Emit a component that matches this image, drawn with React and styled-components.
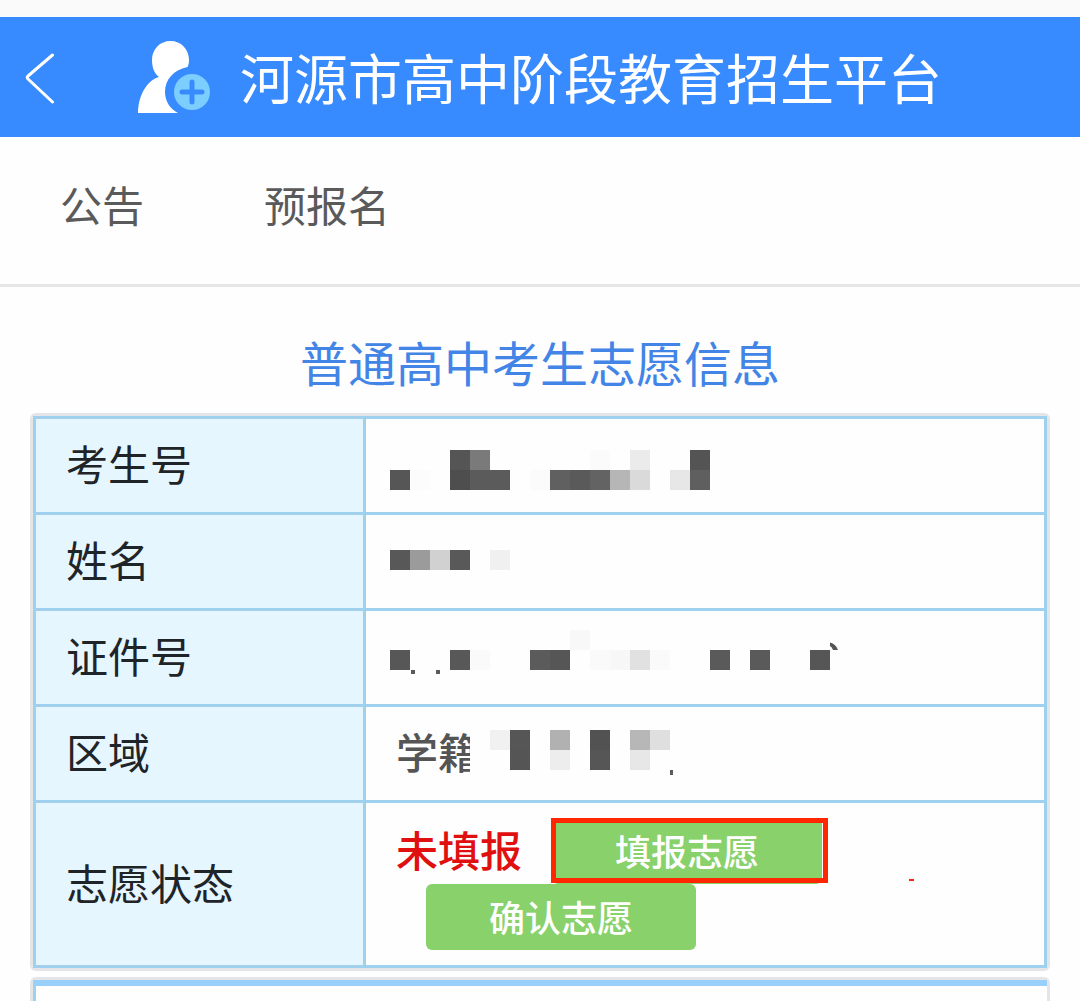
import styled, { createGlobalStyle } from "styled-components";

const colors = {
    header: "#388bff",
    title: "#4285e6",
    line: "#9fd0ee",
    labelBg: "#e5f6ff",
    cellBg: "#fefefe",
    frame: "#e3e5e8",
    green: "#88d16b",
    red: "#e01010",
    mark: "#ff2600",
};

const GlobalStyle = createGlobalStyle`
    * {
        box-sizing: border-box;
    }
    body {
        margin: 0;
        background-color: ${colors.cellBg};
        font-family: "Noto Sans CJK SC", sans-serif;
        overflow-x: hidden;
    }
`
const StatusStrip = styled.div`
    height: 17px;
    background-color: #fafafa;
`
const Header = styled.header`
    display: flex;
    align-items: center;
    height: 120px;
    padding-left: 24px;
    background-color: ${colors.header};
`
const BackButton = styled.button`
    display: flex;
    padding: 0;
    border: none;
    background: none;
    cursor: pointer;
`
const Logo = styled.svg`
    margin: 0 28px 0 80px;
`
const Title = styled.h1`
    margin: 0;
    font-size: 54px;
    font-weight: 400;
    line-height: 80px;
    white-space: nowrap;
    color: #fff;
`
const Nav = styled.nav`
    display: flex;
    gap: 120px;
    height: 150px;
    padding: 37px 60px 0;
    border-bottom: 3px solid #e6e6e6;
`
const NavLink = styled.a`
    font-size: 42px;
    line-height: 60px;
    color: #5a5a5a;
    text-decoration: none;
`
const Main = styled.main`
    display: flex;
    flex-direction: column;
    gap: 6px;
    padding: 38px 30px 0;
`
const Heading = styled.h2`
    margin: 0 0 10px;
    font-size: 48px;
    font-weight: 400;
    line-height: 72px;
    text-align: center;
    color: ${colors.title};
`
const Panel = styled.section`
    border: 3px solid ${colors.frame};
    border-radius: 6px;
`
const NextPanel = styled(Panel)`
    border-bottom: none;
    border-radius: 6px 6px 0 0;
`
const NextPanelBody = styled.div`
    height: 21px;
    border-top: 6px solid #98d0fb;
    border-left: 3px solid ${colors.line};
`
const Table = styled.table`
    width: 100%;
    table-layout: fixed;
    border-spacing: 3px;
    background-color: ${colors.line};
`
const Label = styled.th`
    width: 327px;
    height: ${({$tall})=>$tall ? 162 : 93}px;
    padding: 0 0 5px 30px;
    background-color: ${colors.labelBg};
    font-size: 42px;
    font-weight: 400;
    line-height: 60px;
    text-align: left;
    color: #1f2428;
`
const Value = styled.td`
    padding: 0 0 0 ${({$masked})=>$masked ? 24 : 30}px;
    background-color: ${colors.cellBg};
    font-size: 42px;
    line-height: 60px;
    color: #555;
`
const Mosaic = styled.svg`
    display: block;
    flex-shrink: 0;
`
const RegionRow = styled.div`
    display: flex;
    align-items: center;

    /* the mosaic covers the end of the text */
    ${Mosaic} {
        position: relative;
        margin-left: -10px;
    }
`
const RegionText = styled.span`
    padding-bottom: 5px;
    white-space: nowrap;
    font-weight: 500;
`
const StatusRow = styled.div`
    display: flex;
    flex-wrap: wrap;
    align-items: center;
    position: relative;
`
const StatusText = styled.span`
    padding-bottom: 5px;
    font-weight: 500;
    color: ${colors.red};
`
const ButtonWrap = styled.div`
    position: relative;
    margin-left: 30px;
`
const ActionButton = styled.button`
    display: block;
    width: 270px;
    height: 66px;
    padding: 0 0 3px;
    border: none;
    border-radius: 6px;
    background-color: ${colors.green};
    font-family: inherit;
    font-size: 36px;
    font-weight: 500;
    line-height: 54px;
    color: #fff;
    cursor: pointer;
`
const MarkBox = styled.span`
    position: absolute;
    inset: 0 -6px 1px -1px;
    border: 5px solid ${colors.mark};
    pointer-events: none;
`
const MarkDash = styled.span`
    position: absolute;
    top: 61px;
    left: 513px;
    width: 5px;
    height: 2px;
    background-color: ${colors.mark};
`

// each block is [x, y, colour], 20px square
const examNo = [
    [0, 51, "#565656"], [20, 51, "#fcfcfc"],
    [60, 31, "#555"], [80, 31, "#7a7a7a"], [60, 51, "#4e4e4e"], [80, 51, "#5b5b5b"], [100, 51, "#5b5b5b"],
    [140, 51, "#fbfbfb"], [160, 51, "#606060"], [180, 51, "#5a5a5a"], [200, 51, "#636363"],
    [220, 51, "#b6b6b6"], [240, 31, "#ebebeb"], [240, 51, "#dadada"], [200, 31, "#fbfbfb"],
    [280, 51, "#e7e7e7"], [300, 31, "#545454"], [300, 51, "#5f5f5f"],
];
const personName = [
    [0, 35, "#585858"], [20, 35, "#9b9b9b"], [40, 35, "#d1d1d1"], [60, 35, "#595959"], [100, 35, "#f0f0f0"],
];
const idNo = [
    [0, 39, "#575757"], [60, 39, "#585858"], [80, 39, "#fafafa"], [140, 39, "#5b5b5b"], [160, 39, "#565656"],
    [180, 19, "#f8f8f8"], [200, 39, "#fafafa"], [220, 39, "#f7f7f7"], [240, 39, "#e1e1e1"], [260, 39, "#fafafa"],
    [320, 39, "#5a5a5a"], [360, 39, "#5a5a5a"], [420, 39, "#565656"],
];
const region = [
    [0, 23, colors.cellBg], [0, 43, colors.cellBg], [0, 63, colors.cellBg],
    [20, 23, "#f2f1f2"], [40, 23, "#575657"], [40, 43, "#565556"], [80, 23, "#b2b1b2"], [80, 43, "#eeedee"],
    [120, 23, "#535253"], [120, 43, "#575657"], [160, 23, "#b8b7b8"], [160, 43, "#e8e7e8"], [180, 23, "#e0dfe0"],
];

function Masked({ blocks, width = 460, children }) {
    return (
        <Mosaic width={width} height="93" shapeRendering="crispEdges" aria-hidden="true">
            {blocks.map(([x, y, fill]) => (
                <rect key={`${x}-${y}`} x={x} y={y} width="20" height="20" fill={fill}/>
            ))}
            {children}
        </Mosaic>
    );
}

export default function App() {
    return <>
        <GlobalStyle/>
        <StatusStrip/>
        <Header>
            <BackButton type="button" aria-label="返回">
                <svg width="32" height="54" viewBox="0 0 32 54" fill="none" stroke="#fff" strokeWidth="3" strokeLinecap="round" strokeLinejoin="round">
                    <path d="M28.500 5L4 26Q2.500 27.500 4 29L28.500 52"/>
                </svg>
            </BackButton>
            <Logo width="76" height="76" viewBox="136 39 76 76">
                <path fill="#fff" d="M138 113C138 96 147 80 159 77C154 73 152 67 152 60C152 49 160 41 170.500 41C181 41 189 49 189 60C189 63 188.500 65 187.500 67C173 70 165 80 165 92C165 101 170 109 178 113Z"/>
                <circle cx="192" cy="92" r="18" fill="#7cceff"/>
                <path d="M192 82V102M182 92H202" stroke={colors.header} strokeWidth="5" strokeLinecap="round"/>
            </Logo>
            <Title>河源市高中阶段教育招生平台</Title>
        </Header>

        <Nav>
            <NavLink href="#notice">公告</NavLink>
            <NavLink href="#signup">预报名</NavLink>
        </Nav>

        <Main>
            <Heading>普通高中考生志愿信息</Heading>

            <Panel>
                <Table>
                    <tbody>
                        <tr>
                            <Label scope="row">考生号</Label>
                            <Value $masked>
                                <Masked blocks={examNo}/>
                            </Value>
                        </tr>
                        <tr>
                            <Label scope="row">姓名</Label>
                            <Value $masked>
                                <Masked blocks={personName}/>
                            </Value>
                        </tr>
                        <tr>
                            <Label scope="row">证件号</Label>
                            <Value $masked>
                                <Masked blocks={idNo}>
                                    <path fill="#5a5a5a" d="M21 59h4v4h-4zM46 59h4v4h-4z"/>
                                    <path fill="#555" shapeRendering="auto" d="M440 31.500Q446 33 448 39H443Q442 36 440 35Z"/>
                                </Masked>
                            </Value>
                        </tr>
                        <tr>
                            <Label scope="row">区域</Label>
                            <Value>
                                <RegionRow>
                                    <RegionText>学籍</RegionText>
                                    <Masked blocks={region} width={210}>
                                        <path fill="#5a5a5a" d="M200 63h3v5h-3z"/>
                                    </Masked>
                                </RegionRow>
                            </Value>
                        </tr>
                        <tr>
                            <Label scope="row" $tall>志愿状态</Label>
                            <Value>
                                <StatusRow>
                                    <StatusText>未填报</StatusText>
                                    <ButtonWrap>
                                        <ActionButton type="button">填报志愿</ActionButton>
                                        <MarkBox/>
                                    </ButtonWrap>
                                    <ButtonWrap>
                                        <ActionButton type="button">确认志愿</ActionButton>
                                    </ButtonWrap>
                                    <MarkDash/>
                                </StatusRow>
                            </Value>
                        </tr>
                    </tbody>
                </Table>
            </Panel>

            <NextPanel>
                <NextPanelBody/>
            </NextPanel>
        </Main>
    </>
}
